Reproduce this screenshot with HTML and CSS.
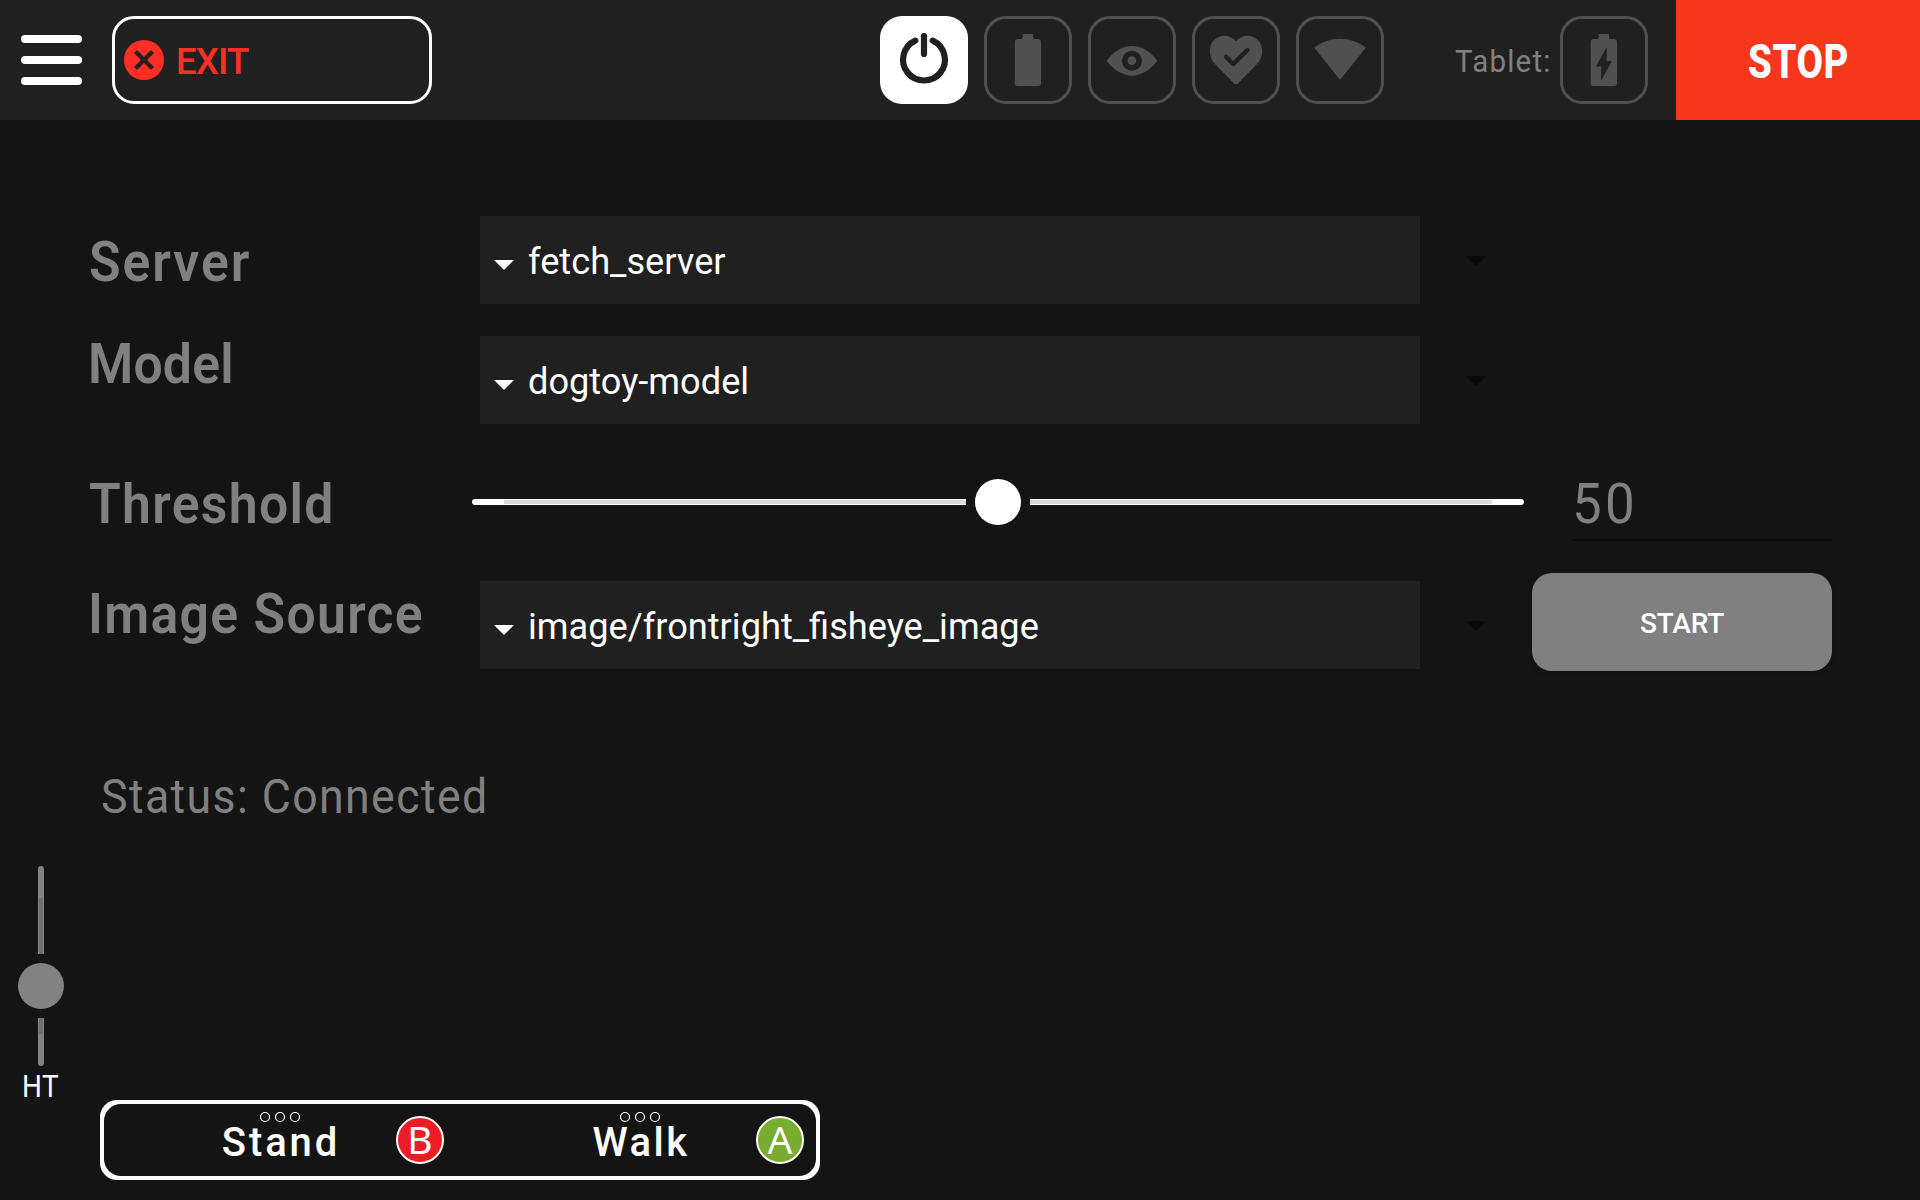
FILE: index.html
```
<!DOCTYPE html>
<html lang="en">
<head>
<meta charset="utf-8">
<title>Fetch</title>
<link rel="stylesheet" href="styles.css">
</head>
<body>
<header class="topbar">
  <div class="menu"><span></span><span></span><span></span></div>
  <div class="exit">
    <svg width="40" height="40" viewBox="0 0 40 40"><circle cx="20" cy="20" r="20" fill="#ff3023"/><path d="M11.500 11.500L28.500 28.500M28.500 11.500L11.500 28.500" stroke="#202020" stroke-width="4.2"/></svg>
    <span class="exit-text">EXIT</span>
  </div>
  <div class="status-icons">
    <svg class="tile tile-on" viewBox="0 0 88 88"><g fill="none" stroke="#202020" stroke-width="6.2" stroke-linecap="round"><path d="M35.3 24.6A20.9 20.9 0 1 0 52.7 24.6"/><path d="M44 20.2V38"/></g></svg>
    <svg class="tile" viewBox="0 0 88 88"><rect x="1.5" y="1.5" width="85" height="85" rx="20.5" class="frame"/><path d="M38.6 18H49.3V23H54a3 3 0 0 1 3 3V67a3 3 0 0 1-3 3H33.8a3 3 0 0 1-3-3V26a3 3 0 0 1 3-3H38.6Z"/></svg>
    <svg class="tile" viewBox="0 0 88 88"><rect x="1.5" y="1.5" width="85" height="85" rx="20.5" class="frame"/><path d="M18.6 44.8C25.5 35.5 34.5 30 44 30S62.5 35.5 69.2 44.8C62.5 54 53.5 59.7 44 59.7S25.5 54 18.6 44.8Z"/><circle cx="43.9" cy="44.7" r="10" fill="#202020"/><circle cx="43.9" cy="44.7" r="4.4"/></svg>
    <svg class="tile" viewBox="0 0 88 88"><rect x="1.5" y="1.5" width="85" height="85" rx="20.5" class="frame"/><path d="M44 25.3C40.5 21.5 36.5 19.7 32.5 19.7C24 19.7 17.9 26.5 17.9 35C17.9 40 19.5 44 23 48L41.5 67C43 68.7 45 68.7 46.5 67L65 48C68.5 44 70.2 40 70.2 35C70.2 26.5 64 19.7 55.5 19.7C51.5 19.7 47.5 21.5 44 25.3Z"/><path d="M34 40.8L41.3 48L55.4 34" fill="none" stroke="#202020" stroke-width="4.4" stroke-linecap="round" stroke-linejoin="round"/></svg>
    <svg class="tile" viewBox="0 0 88 88"><rect x="1.5" y="1.5" width="85" height="85" rx="20.5" class="frame"/><path d="M18.2 31.5C26 25.5 35 22.7 44 22.7S62 25.5 69.9 31.5L44 64Z"/></svg>
  </div>
  <span class="tablet-text">Tablet:</span>
  <svg class="tile" viewBox="0 0 88 88"><rect x="1.5" y="1.5" width="85" height="85" rx="20.5" class="frame"/><path d="M38.5 18H49V23H54a3 3 0 0 1 3 3V67a3 3 0 0 1-3 3H33.7a3 3 0 0 1-3-3V26a3 3 0 0 1 3-3H38.5Z"/><path d="M46.7 31L36 50.5H41.2V64.7L51.7 45H46.7Z" fill="#202020"/></svg>
  <div class="stop"><span class="stop-text">STOP</span></div>
</header>

<main>
  <div class="row row-server">
    <span class="label label-server">Server</span>
    <div class="select"><svg class="caret" width="20" height="10"><path d="M0 0H20L10 10Z" fill="#fff"/></svg><span>fetch_server</span></div>
    <svg class="ghost" width="20" height="10"><path d="M0 0H20L10 10Z"/></svg>
  </div>
  <div class="row row-model">
    <span class="label label-model">Model</span>
    <div class="select"><svg class="caret" width="20" height="10"><path d="M0 0H20L10 10Z" fill="#fff"/></svg><span>dogtoy-model</span></div>
    <svg class="ghost" width="20" height="10"><path d="M0 0H20L10 10Z"/></svg>
  </div>
  <div class="row row-threshold">
    <span class="label label-threshold">Threshold</span>
    <svg class="slider" width="1052" height="46" viewBox="0 0 1052 46">
      <path d="M3 20H494V26H3a3 3 0 0 1 0-6ZM558 20H1049a3 3 0 0 1 0 6H558Z" fill="#fff"/>
      <path d="M32 21H494V25H32ZM558 21H1020V25H558Z" fill="#d9dad9"/>
      <circle cx="526" cy="23" r="23" fill="#fff"/>
    </svg>
    <div class="field"><span class="field-text">50</span></div>
  </div>
  <div class="row row-source">
    <span class="label label-source">Image Source</span>
    <div class="select"><svg class="caret" width="20" height="10"><path d="M0 0H20L10 10Z" fill="#fff"/></svg><span>image/frontright_fisheye_image</span></div>
    <svg class="ghost" width="20" height="10"><path d="M0 0H20L10 10Z"/></svg>
    <div class="start">START</div>
  </div>
  <p class="status"><span class="status-text">Status: Connected</span></p>
  <div class="height">
    <svg width="46" height="200" viewBox="0 0 46 200">
      <path d="M20 88V3a3 3 0 0 1 6 0V88ZM20 152H26V197a3 3 0 0 1-6 0Z" fill="#828282"/>
      <path d="M21 32H25V88H21ZM21 152H25V168H21Z" fill="#707070"/>
      <circle cx="23" cy="120" r="23" fill="#828282"/>
    </svg>
    <span class="height-text">HT</span>
  </div>
  <div class="modes">
    <div class="modes-inner">
      <div class="mode mode-left">
        <svg width="42" height="12" viewBox="0 0 42 12"><g fill="none" stroke="#fff" stroke-width="1.2"><circle cx="6" cy="6" r="4.5"/><circle cx="21" cy="6" r="4.5"/><circle cx="36" cy="6" r="4.5"/></g></svg>
        <span class="mode-text mode-stand">Stand</span>
      </div>
      <div class="key key-b"><span>B</span></div>
      <div class="mode mode-right">
        <svg width="42" height="12" viewBox="0 0 42 12"><g fill="none" stroke="#fff" stroke-width="1.2"><circle cx="6" cy="6" r="4.5"/><circle cx="21" cy="6" r="4.5"/><circle cx="36" cy="6" r="4.5"/></g></svg>
        <span class="mode-text mode-walk">Walk</span>
      </div>
      <div class="key key-a"><span>A</span></div>
    </div>
  </div>
</main>
</body>
</html>
```
FILE: styles.css
```
* { box-sizing: border-box; }
body {
  margin: 0;
  height: 1200px;
  background: #141414;
  color: #fff;
  font-family: Roboto, "Liberation Sans", sans-serif;
  overflow: hidden;
}
svg { display: block; flex: none; }

/* top bar */
.topbar { display: flex; align-items: center; height: 120px; background: #202020; }
.menu { display: flex; flex-direction: column; gap: 13px; width: 61px; margin-left: 21.4px; }
.menu span { height: 8px; border-radius: 4px; background: #fff; }
.exit {
  display: flex; align-items: center; gap: 12px;
  width: 320px; height: 88px; margin-left: 29.6px; padding-left: 9px;
  border: 3px solid #fff; border-radius: 22px;
}
.exit-text { padding-top: 3px; color: #ff3023; font-size: 36.5px; font-weight: 500; line-height: 40px; letter-spacing: -0.8px; }
.status-icons { display: flex; gap: 16px; margin-left: 448px; }
.tile { width: 88px; height: 88px; fill: #505050; }
.tile-on { background: #fff; border-radius: 22px; }
.frame { fill: none; stroke: #505050; stroke-width: 3; }
.tablet-text {
  width: 105px; margin-left: 71px; padding-top: 2px; color: #808080;
  font-size: 31px; letter-spacing: 1.3px; transform: scaleX(0.95); transform-origin: 0 50%;
}
.stop { display: flex; align-items: center; align-self: stretch; width: 244px; margin-left: 28px; padding: 2px 0 0 72px; background: #f7371b; }
.stop-text { font-size: 48px; font-weight: 800; letter-spacing: 0.7px; transform: scaleX(0.8); transform-origin: 0 50%; }

/* settings form */
main { padding-top: 80px; }
.row { display: grid; grid-template-columns: 390px 940px 112px 300px; align-items: center; padding-left: 90px; }
.row-server, .row-model { height: 120px; }
.row-threshold { height: 124px; }
.row-source { height: 116px; }
.label {
  margin-left: -1px; color: #808080; font-size: 55px; font-weight: 600; line-height: 64px; white-space: nowrap;
  transform: scaleX(0.94); transform-origin: 0 50%;
}
.label-server { margin-top: 4px; margin-left: -1px; letter-spacing: 2.1px; }
.label-model { margin-bottom: 32px; margin-left: -2px; letter-spacing: 0.2px; }
.label-threshold { margin-top: 4px; letter-spacing: 1.4px; }
.label-source { margin-bottom: 16px; margin-left: -2px; letter-spacing: 1.4px; }
.select {
  display: flex; align-items: center; gap: 14px; height: 88px;
  padding: 2px 0 0 14px; background: #202020; font-size: 36.2px;
}
.row-source .select { margin-top: 6px; }
.caret { margin-top: 8px; }
.ghost { margin-left: 46px; margin-top: 2px; fill: #090909; }
.row-source .ghost { margin-top: 8px; }
.slider { grid-column: 2 / span 2; margin-left: -8px; }
.field { display: flex; align-items: center; height: 76px; margin: 2px 0 0 40px; padding-top: 4px; border-bottom: 2px solid #090909; }
.field-text { color: #808080; font-size: 55px; letter-spacing: 3.5px; transform: scaleX(0.96); transform-origin: 0 50%; }
.start {
  display: flex; align-items: center; justify-content: center; height: 98px; padding-top: 2px;
  border-radius: 20px; background: #808080; font-size: 28px; font-weight: 500;
  letter-spacing: -0.2px; box-shadow: 1px 2px 5px rgba(0, 0, 0, 0.25);
}
.status { height: 186px; margin: 0; padding: 85px 0 0 101px; }
.status-text {
  display: inline-block; color: #808080; font-size: 48px; line-height: 64px;
  letter-spacing: 1.5px; transform: scaleX(0.93); transform-origin: 0 50%;
}

/* body height slider */
.height { height: 234px; padding-left: 18px; }
.height-text { display: block; margin: 3px 0 0 3.5px; font-size: 31px; line-height: 36px; letter-spacing: 0.6px; transform: scaleX(0.9); transform-origin: 0 50%; }

/* mode bar */
.modes { width: 720px; height: 80px; margin-left: 100px; padding: 4px; border-radius: 17px; background: #fff; }
.modes-inner { display: grid; grid-template-columns: 292px 48px 312px 48px; align-items: center; height: 72px; border-radius: 17px; background: #141414; }
.mode { display: flex; flex-direction: column; align-self: start; align-items: center; padding-top: 7px; }
.mode-left { padding-left: 60px; }
.mode-right { padding-left: 80px; }
.mode-text { font-size: 40px; font-weight: 500; line-height: 40px; }
.mode-stand { margin-left: 2px; letter-spacing: 2.9px; }
.mode-walk { margin-left: 2px; letter-spacing: 2.5px; }
.key {
  display: flex; align-items: center; justify-content: center; width: 48px; height: 48px;
  border: 2px solid #fff; border-radius: 50%; font: 39px/44px "Noto Sans", sans-serif;
}
.key span { margin-top: -3px; }
.key-b { background: #ee1c25; }
.key-a { background: #78ac2f; }
```
